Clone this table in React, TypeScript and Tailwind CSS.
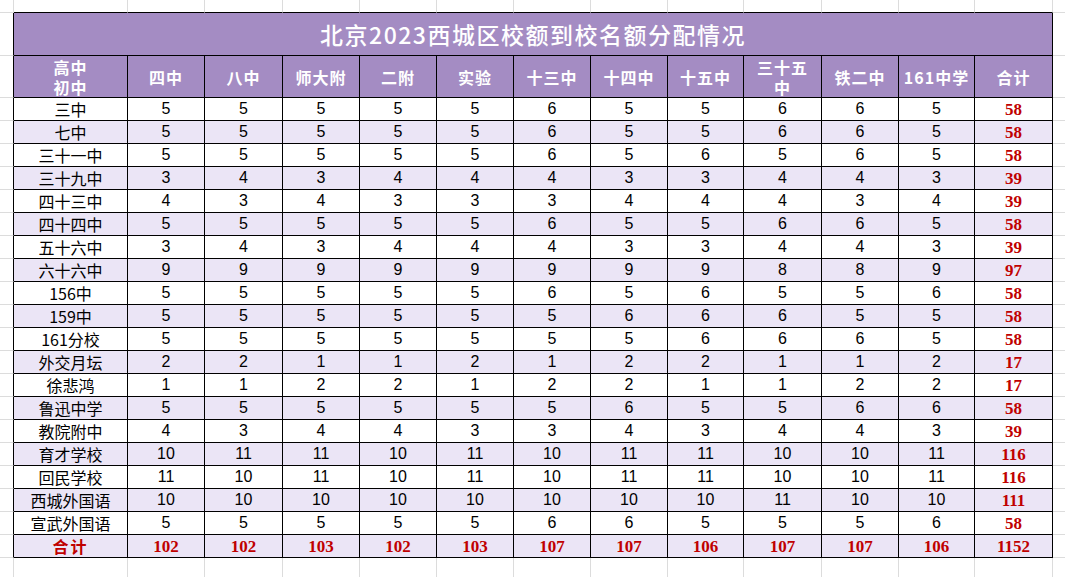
import React from 'react';

const GRAY = 'border-[#dcdcdc]';

const widths = ['w-[14px]', 'w-[114px]', 'w-[77px]', 'w-[78px]', 'w-[77px]', 'w-[77px]', 'w-[77px]', 'w-[77px]', 'w-[77px]', 'w-[76px]', 'w-[78px]', 'w-[77px]', 'w-[76px]', 'w-[78px]', 'w-[12px]'];

const headers: React.ReactNode[] = [
  <>高中<br />初中</>,
  '四中', '八中', '师大附', '二附', '实验', '十三中', '十四中', '十五中',
  <>三十五<br />中</>,
  '铁二中', '161中学', '合计',
];

const rows: [string, ...number[]][] = [
  ['三中', 5, 5, 5, 5, 5, 6, 5, 5, 6, 6, 5, 58],
  ['七中', 5, 5, 5, 5, 5, 6, 5, 5, 6, 6, 5, 58],
  ['三十一中', 5, 5, 5, 5, 5, 6, 5, 6, 5, 6, 5, 58],
  ['三十九中', 3, 4, 3, 4, 4, 4, 3, 3, 4, 4, 3, 39],
  ['四十三中', 4, 3, 4, 3, 3, 3, 4, 4, 4, 3, 4, 39],
  ['四十四中', 5, 5, 5, 5, 5, 6, 5, 5, 6, 6, 5, 58],
  ['五十六中', 3, 4, 3, 4, 4, 4, 3, 3, 4, 4, 3, 39],
  ['六十六中', 9, 9, 9, 9, 9, 9, 9, 9, 8, 8, 9, 97],
  ['156中', 5, 5, 5, 5, 5, 6, 5, 6, 5, 5, 6, 58],
  ['159中', 5, 5, 5, 5, 5, 5, 6, 6, 6, 5, 5, 58],
  ['161分校', 5, 5, 5, 5, 5, 5, 5, 6, 6, 6, 5, 58],
  ['外交月坛', 2, 2, 1, 1, 2, 1, 2, 2, 1, 1, 2, 17],
  ['徐悲鸿', 1, 1, 2, 2, 1, 2, 2, 1, 1, 2, 2, 17],
  ['鲁迅中学', 5, 5, 5, 5, 5, 5, 6, 5, 5, 6, 6, 58],
  ['教院附中', 4, 3, 4, 4, 3, 3, 4, 3, 4, 4, 3, 39],
  ['育才学校', 10, 11, 11, 10, 11, 10, 11, 11, 10, 10, 11, 116],
  ['回民学校', 11, 10, 11, 10, 11, 10, 11, 11, 10, 10, 11, 116],
  ['西城外国语', 10, 10, 10, 10, 10, 10, 10, 10, 11, 10, 10, 111],
  ['宣武外国语', 5, 5, 5, 5, 5, 6, 6, 5, 5, 5, 6, 58],
];

const totals = [102, 102, 103, 102, 103, 107, 107, 106, 107, 107, 106, 1152];

// table cell: black right + bottom border
const cell = 'p-0 text-center align-middle border-r border-b border-black';
// grid cells outside the table
const padLeft = 'p-0 border-r border-b border-r-black border-b-[#dcdcdc]';
const padRight = `p-0 border-b ${GRAY}`;

const cjk = "font-['Noto_Sans_CJK_SC',sans-serif]";
const num = "font-['Liberation_Sans','Noto_Sans_CJK_SC',sans-serif]";
const red = "font-['Liberation_Serif','Noto_Sans_CJK_SC',serif] font-bold text-[#c00000] text-[17px]";

export default function App() {
  return (
    <div className="w-[1065px] h-[577px] overflow-hidden bg-white">
      <table className="w-[1065px] table-fixed border-separate border-spacing-0">
        <colgroup>
          {widths.map((w, i) => (
            <col key={i} className={w} />
          ))}
        </colgroup>
        <tbody>
          {/* grid row above the table */}
          <tr className="h-[13px]">
            <td className={`p-0 border-r border-b ${GRAY}`} />
            {widths.slice(1, 14).map((_, i) => (
              <td key={i} className="p-0 border-r border-b border-r-[#dcdcdc] border-b-black" />
            ))}
            <td className={padRight} />
          </tr>

          <tr className="h-[43px]">
            <td className={padLeft} />
            <td colSpan={13} className={`${cell} bg-[#a48cc3] text-white text-[23px] tracking-[1.5px] ${cjk} font-medium leading-none`}>
              北京2023西城区校额到校名额分配情况
            </td>
            <td className={padRight} />
          </tr>

          <tr className="h-[42px]">
            <td className={padLeft} />
            {headers.map((h, i) => (
              <td key={i} className={`${cell} bg-[#a48cc3] text-white text-[16px] font-bold tracking-[1px] leading-[20px] ${cjk}`}>
                {h}
              </td>
            ))}
            <td className={padRight} />
          </tr>

          {rows.map(([name, ...vals], r) => (
            <tr key={name} className={`h-[23px] ${r % 2 === 1 ? 'bg-[#ebe5f6]' : 'bg-white'}`}>
              <td className={`${padLeft} bg-white`} />
              <td className={`${cell} text-[16px] leading-none text-black ${cjk}`}>{name}</td>
              {vals.map((v, i) => (
                <td
                  key={i}
                  className={`${cell} leading-none ${i === vals.length - 1 ? red : `text-[16px] text-black ${num}`}`}
                >
                  {v}
                </td>
              ))}
              <td className={`${padRight} bg-white`} />
            </tr>
          ))}

          <tr className="h-[23px] bg-[#ebe5f6]">
            <td className={`${padLeft} bg-white`} />
            <td className={`${cell} text-[16px] leading-none font-bold text-[#c00000] tracking-[2px] ${cjk}`}>合计</td>
            {totals.map((t, i) => (
              <td key={i} className={`${cell} leading-none ${red}`}>
                {t}
              </td>
            ))}
            <td className={`${padRight} bg-white`} />
          </tr>

          {/* grid row below the table */}
          <tr className="h-[19px]">
            {widths.slice(0, 14).map((_, i) => (
              <td key={i} className={`p-0 border-r ${GRAY}`} />
            ))}
            <td className="p-0" />
          </tr>
        </tbody>
      </table>
    </div>
  );
}
